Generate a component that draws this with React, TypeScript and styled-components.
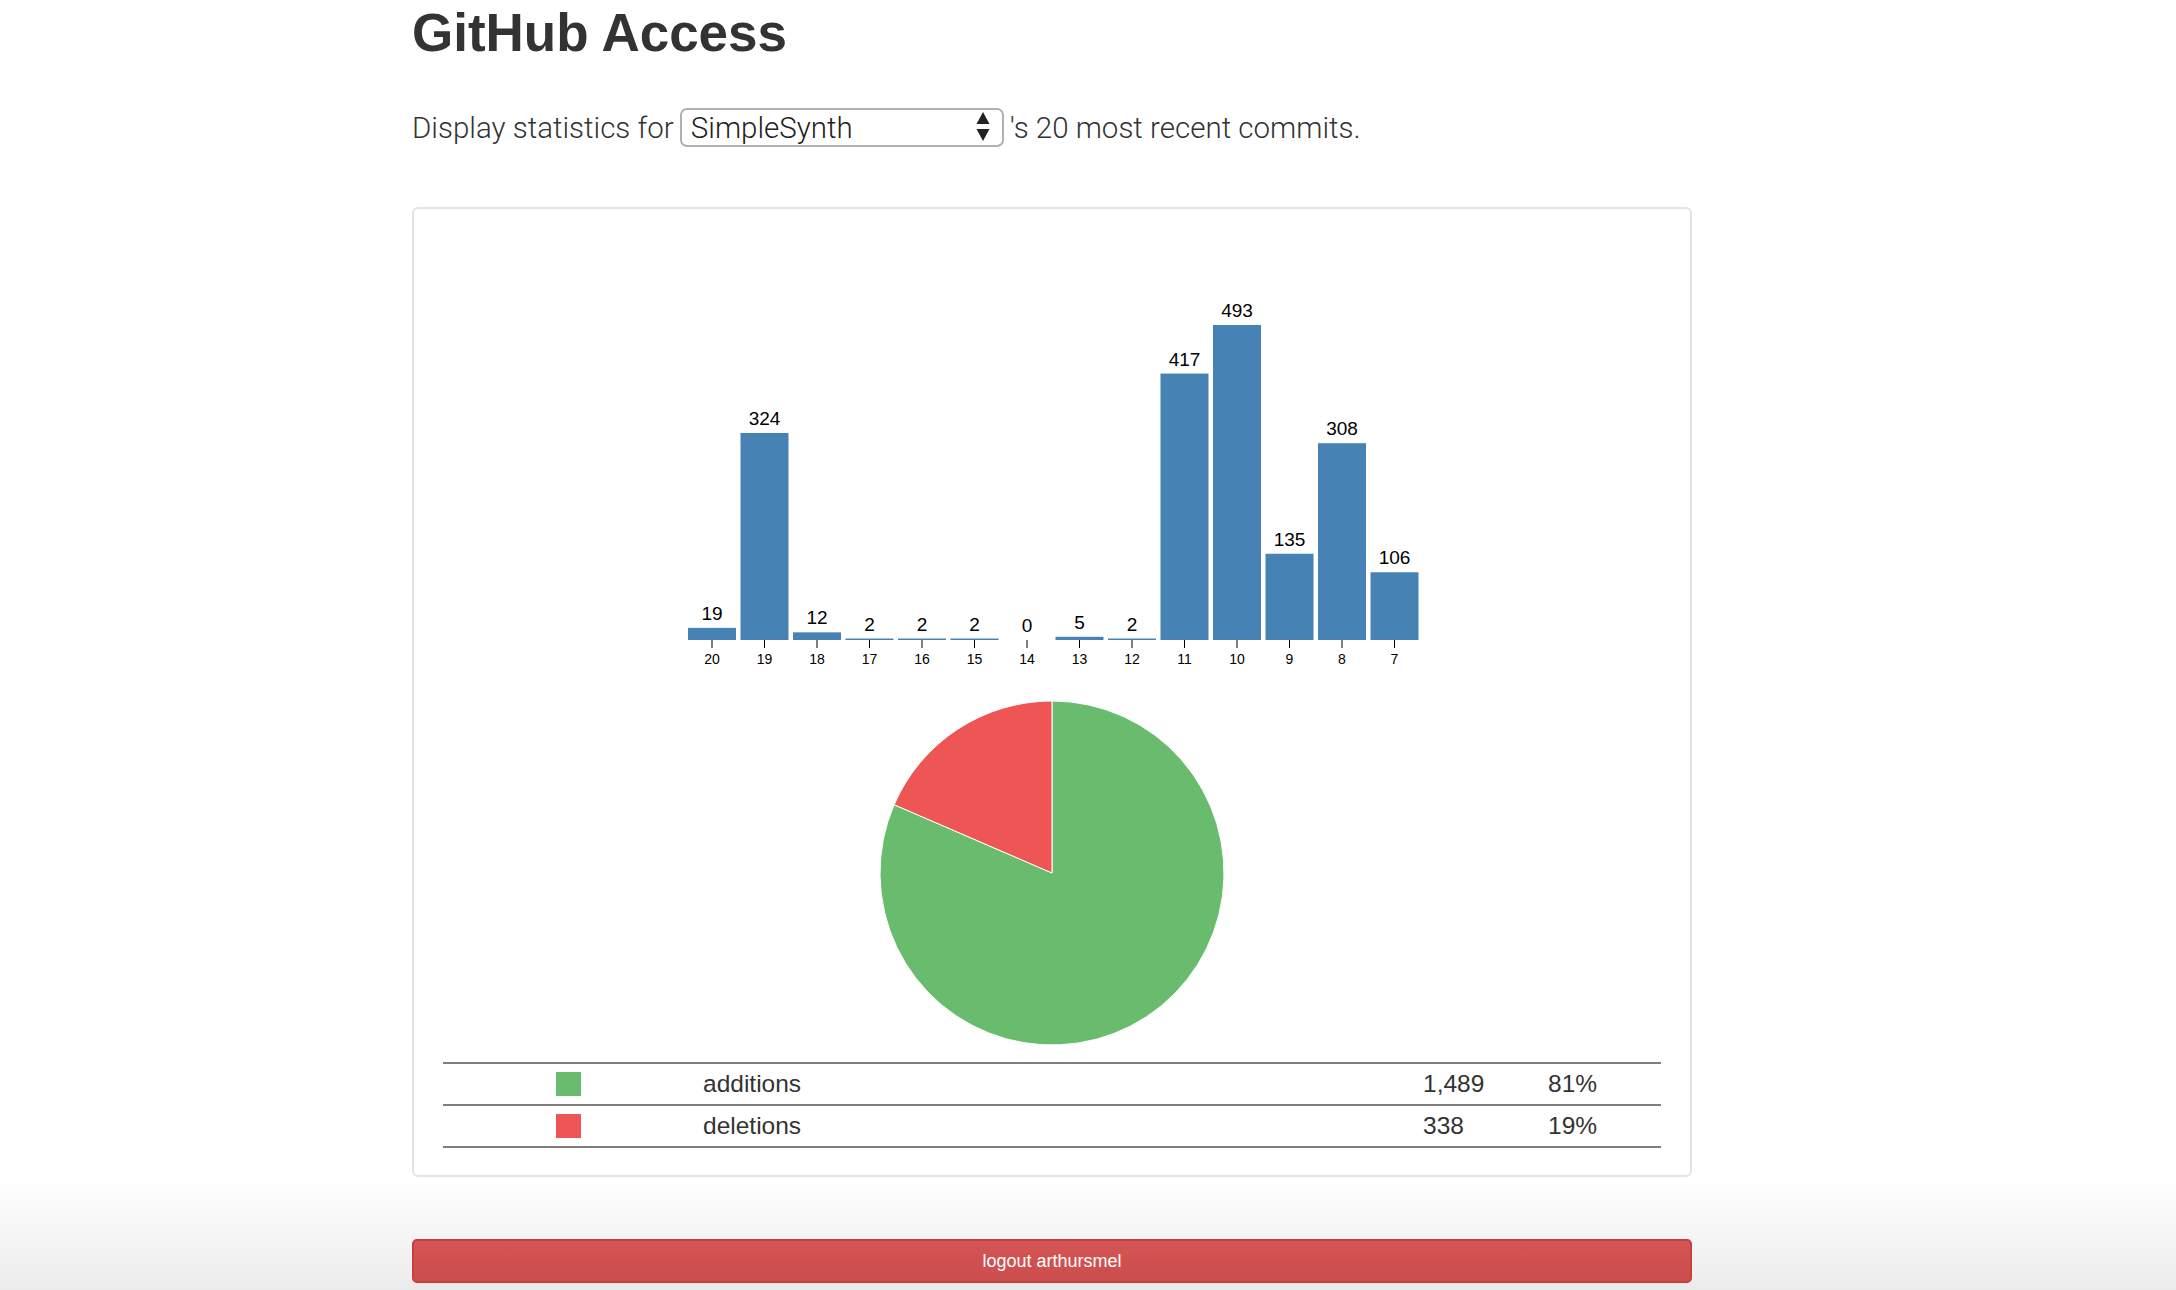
import React from "react";
import styled, { createGlobalStyle } from "styled-components";

const GlobalStyle = createGlobalStyle`
  html, body { margin: 0; padding: 0; }
  body {
    min-height: 1290px;
    background: linear-gradient(to bottom, #ffffff 0, #ffffff 1180px, #ebebeb 1290px);
    font-family: "Liberation Sans", Arial, sans-serif;
    color: #333;
  }
`;

const Page = styled.div`
  width: 1280px;
  margin-left: 412px;
  display: flex;
  flex-direction: column;
`;

const Title = styled.h1`
  margin: 3px 0 0;
  font: bold 53px/60px "Liberation Sans", Arial, sans-serif;
  color: #333;
`;

const Prompt = styled.div`
  display: flex;
  align-items: center;
  gap: 6px;
  margin-top: 45px;
  height: 39px;
  font-family: Roboto, "Liberation Sans", sans-serif;
  font-weight: 300;
  font-size: 29.5px;
  color: #333;
  white-space: nowrap;
`;

const SelectWrap = styled.div`
  position: relative;
  width: 324px;
  height: 39px;
`;

const Select = styled.select`
  appearance: none;
  -webkit-appearance: none;
  box-sizing: border-box;
  width: 100%;
  height: 100%;
  border: 2px solid #b0b0b0;
  border-radius: 7px;
  background: #fff;
  padding: 0 40px 0 9px;
  font: inherit;
  color: #222;
  outline: none;
`;

const SelectArrows = styled.svg`
  position: absolute;
  right: 14px;
  top: 4px;
  pointer-events: none;
`;

const Panel = styled.div`
  margin-top: 60px;
  border: 2px solid #e3e3e3;
  border-radius: 6px;
  padding: 1px 29px 27px;
  display: flex;
  flex-direction: column;
  align-items: center;
  background: #fff;
`;

const Chart = styled.svg`
  display: block;
  font-family: "Liberation Sans", Arial, sans-serif;
`;

const Legend = styled.div`
  align-self: stretch;
  margin-top: 9px;
  border-bottom: 2px solid #7f7f7f;
  font-family: "Liberation Sans", Arial, sans-serif;
  font-size: 24.5px;
  color: #333;
`;

const LegendRow = styled.div`
  display: grid;
  grid-template-columns: 260px 1fr 125px 113px;
  align-items: center;
  height: 40px;
  border-top: 2px solid #7f7f7f;
`;

const SwatchCell = styled.div`
  padding-left: 113px;
  display: flex;
  align-items: center;
`;

const Swatch = styled.span<{ $color: string }>`
  display: block;
  width: 25px;
  height: 24px;
  background: ${(p) => p.$color};
`;

const LogoutButton = styled.button`
  margin-top: 62px;
  height: 44px;
  width: 100%;
  border: 2px solid #c63f3f;
  border-radius: 5px;
  background: linear-gradient(to bottom, #d65454, #cb4d4d);
  color: #fff;
  font: 18px "Liberation Sans", Arial, sans-serif;
  cursor: pointer;
`;

const bars = [
  { label: "20", value: 19 },
  { label: "19", value: 324 },
  { label: "18", value: 12 },
  { label: "17", value: 2 },
  { label: "16", value: 2 },
  { label: "15", value: 2 },
  { label: "14", value: 0 },
  { label: "13", value: 5 },
  { label: "12", value: 2 },
  { label: "11", value: 417 },
  { label: "10", value: 493 },
  { label: "9", value: 135 },
  { label: "8", value: 308 },
  { label: "7", value: 106 },
];

const GREEN = "#69bb6d";
const RED = "#ee5656";

const slices = [
  { name: "additions", value: 1489, color: GREEN },
  { name: "deletions", value: 338, color: RED },
];

function BarChart() {
  const base = 430;
  const x0 = 26;
  const step = 52.5;
  const bw = 48;
  const scale = 315 / 493;
  return (
    <Chart width={780} height={483}>
      {bars.map((b, i) => {
        const h = Math.max(b.value * scale, b.value > 0 ? 1.5 : 0);
        const x = x0 + i * step;
        const cx = x + bw / 2;
        return (
          <g key={b.label}>
            <rect x={x} y={base - h} width={bw} height={h} fill="#4682b4" />
            <text x={cx} y={base - h - 8} textAnchor="middle" fontSize={19} fill="#000">
              {b.value}
            </text>
            <line x1={cx} x2={cx} y1={base} y2={base + 8} stroke="#000" strokeWidth={1} />
            <text x={cx} y={base + 24} textAnchor="middle" fontSize={14} fill="#000">
              {b.label}
            </text>
          </g>
        );
      })}
    </Chart>
  );
}

function PieChart() {
  const cx = 180;
  const cy = 180;
  const r = 172;
  const total = slices.reduce((s, d) => s + d.value, 0);
  let start = 0;
  const pt = (a: number) => [cx + r * Math.sin(a), cy - r * Math.cos(a)];
  return (
    <Chart width={360} height={360}>
      {slices.map((s) => {
        const end = start + (s.value / total) * Math.PI * 2;
        const [x1, y1] = pt(start);
        const [x2, y2] = pt(end);
        const large = end - start > Math.PI ? 1 : 0;
        const d = `M${cx},${cy} L${x1},${y1} A${r},${r} 0 ${large} 1 ${x2},${y2} Z`;
        start = end;
        return <path key={s.name} d={d} fill={s.color} stroke="#fff" strokeWidth={1} />;
      })}
    </Chart>
  );
}

export default function App() {
  const total = slices.reduce((s, d) => s + d.value, 0);
  return (
    <>
      <GlobalStyle />
      <Page>
        <Title>GitHub Access</Title>
        <Prompt>
          <span>Display statistics for</span>
          <SelectWrap>
            <Select defaultValue="SimpleSynth">
              <option>SimpleSynth</option>
            </Select>
            <SelectArrows width={14} height={30} viewBox="0 0 14 30">
              <path d="M7 0 L13.5 12 L0.5 12 Z" fill="#222" />
              <path d="M0.5 17 L13.5 17 L7 29 Z" fill="#222" />
            </SelectArrows>
          </SelectWrap>
          <span>'s 20 most recent commits.</span>
        </Prompt>
        <Panel>
          <BarChart />
          <PieChart />
          <Legend>
            {slices.map((s) => (
              <LegendRow key={s.name}>
                <SwatchCell>
                  <Swatch $color={s.color} />
                </SwatchCell>
                <span>{s.name}</span>
                <span>{s.value.toLocaleString("en-US")}</span>
                <span>{Math.round((s.value / total) * 100)}%</span>
              </LegendRow>
            ))}
          </Legend>
        </Panel>
        <LogoutButton>logout arthursmel</LogoutButton>
      </Page>
    </>
  );
}
